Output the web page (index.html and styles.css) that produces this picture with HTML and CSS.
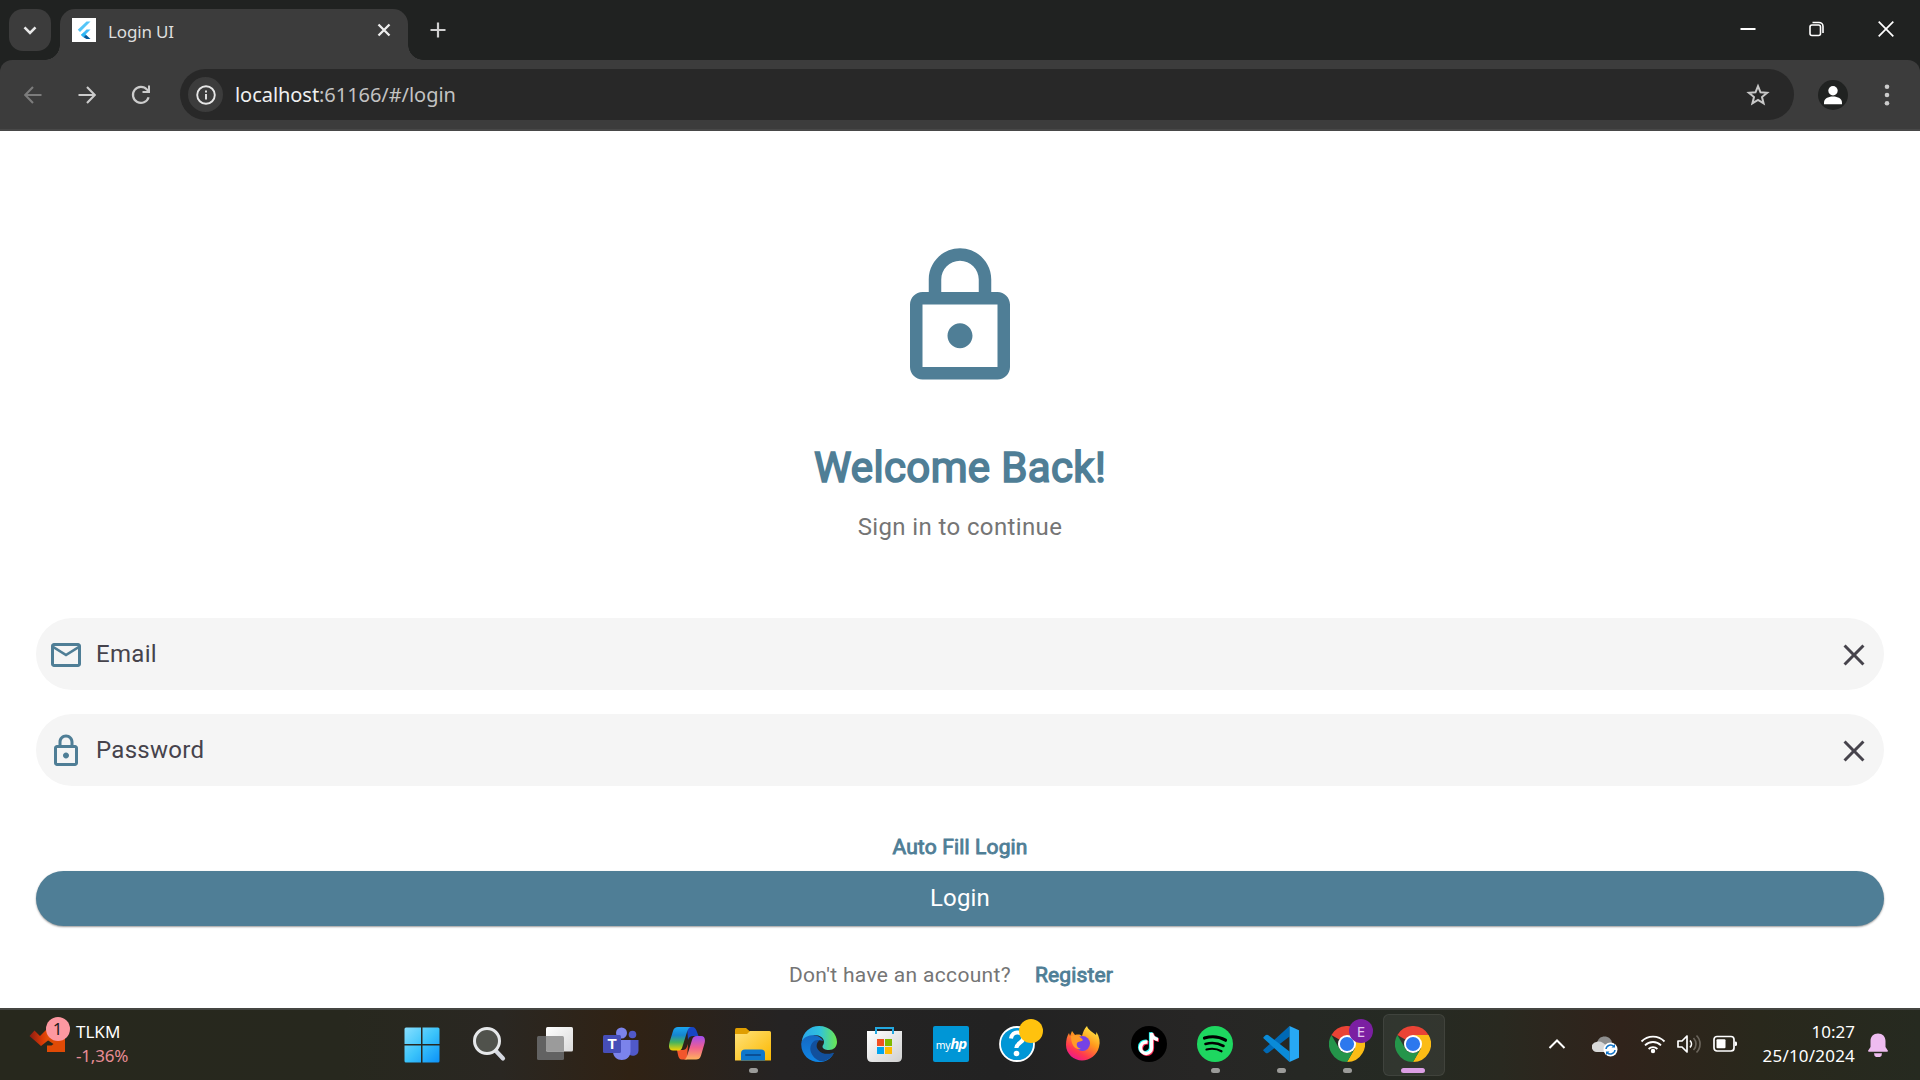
FILE: index.html
```html
<!DOCTYPE html>
<html lang="en">
<head>
<meta charset="utf-8">
<title>Login UI</title>
<link rel="stylesheet" href="styles.css">
</head>
<body>
<div class="screen">
  <header class="tabstrip">
    <button class="tab-search"><svg width="42" height="42" viewBox="0 0 42 42"><path d="M15.5 18.3l5.5 5.5 5.5-5.5" fill="none" stroke="#e8e8e8" stroke-width="2.6"/></svg></button>
    <div class="tab">
      <span class="favicon"><svg width="24" height="24" viewBox="0 0 24 24"><path d="M14.5 3.5h4L8 14l-2.200-2.200z" fill="#54c5f8"/><path d="M18.500 11.500h-4L9 17l2 2z" fill="#40b8f5"/><path d="M9 16.800l2.800-2.300 2.300 2.300-2.500 2.400z" fill="#29b6f6"/><path d="M11.500 19.300l2.500-2.500 4.500 4.200h-4z" fill="#01579b"/></svg></span>
      <span class="tab-title">Login UI</span>
      <svg class="tab-close" width="14" height="14" viewBox="0 0 14 14"><path d="M1.500 1.500l11 11M12.500 1.500l-11 11" stroke="#eee" stroke-width="2.300"/></svg>
    </div>
    <svg class="new-tab" width="16" height="16" viewBox="0 0 16 16"><path d="M8 .5v15M.5 8h15" stroke="#d0d0d0" stroke-width="2.200"/></svg>
    <div class="window-controls">
      <svg width="16" height="16" viewBox="0 0 16 16"><path d="M.5 8h15" stroke="#fff" stroke-width="2"/></svg>
      <svg width="16" height="16" viewBox="0 0 16 16"><rect x="1" y="4" width="10.500" height="10.500" rx="2" fill="none" stroke="#fff" stroke-width="1.600"/><path d="M3.500 1.500H10a4 4 0 0 1 4 4V12" fill="none" stroke="#fff" stroke-width="1.600"/></svg>
      <svg width="16" height="16" viewBox="0 0 16 16"><path d="M.7.7l14.600 14.600M15.300.7L.7 15.300" stroke="#fff" stroke-width="1.700"/></svg>
    </div>
  </header>

  <nav class="toolbar">
    <div class="nav-buttons">
      <svg width="18" height="18" viewBox="0 0 18 18"><path d="M17.500 9H1.500M9 1L1.200 9 9 17" fill="none" stroke="#7c7c7c" stroke-width="2.100"/></svg>
      <svg width="18" height="18" viewBox="0 0 18 18"><path d="M.5 9h16M9 1l7.800 8L9 17" fill="none" stroke="#ccc" stroke-width="2.100"/></svg>
      <svg width="20" height="20" viewBox="0 0 20 20"><path d="M17.600 12.200A8 8 0 1 1 16 4.600L18 6.800" fill="none" stroke="#ccc" stroke-width="2.200"/><path d="M19 .5V8h-7.500V5.900H17V.5z" fill="#ccc"/></svg>
    </div>
    <div class="omnibox">
      <span class="site-info"><svg width="20" height="20" viewBox="0 0 20 20"><circle cx="10" cy="10" r="8.800" fill="none" stroke="#e6e6e6" stroke-width="1.900"/><path d="M10 9v5.500M10 5.400v2" stroke="#e6e6e6" stroke-width="1.900"/></svg></span>
      <span class="url"><b>localhost</b>:61166/#/login</span>
      <svg class="star" width="24" height="24" viewBox="0 0 24 24"><path d="M12 3.200l2.500 6.100 6.600.5-5.100 4.200 1.600 6.400L12 16.900l-5.600 3.500L8 14 2.900 9.800l6.600-.5z" fill="none" stroke="#c8c8c8" stroke-width="2"/></svg>
    </div>
    <span class="avatar"><svg width="30" height="30" viewBox="0 0 30 30"><circle cx="15" cy="10.700" r="4.700" fill="#fff"/><path d="M6 24.200v-1.500c0-4 4-6.200 9-6.200s9 2.200 9 6.200v1.500z" fill="#fff"/></svg></span>
    <svg class="menu" width="6" height="24" viewBox="0 0 6 24"><circle cx="3" cy="3.700" r="2.300" fill="#ccc"/><circle cx="3" cy="12" r="2.300" fill="#ccc"/><circle cx="3" cy="20.300" r="2.300" fill="#ccc"/></svg>
  </nav>

  <main class="page">
    <svg class="lock" width="150" height="150" viewBox="0 0 24 24" fill="#4f7e96"><path d="M12 17c1.100 0 2-.9 2-2s-.9-2-2-2-2 .9-2 2 .9 2 2 2zm6-9h-1V6c0-2.760-2.240-5-5-5S7 3.240 7 6v2H6c-1.100 0-2 .9-2 2v10c0 1.100.9 2 2 2h12c1.100 0 2-.9 2-2V10c0-1.100-.9-2-2-2zM9 6c0-1.660 1.340-3 3-3s3 1.340 3 3v2H9V6zm9 14H6V10h12v10z"/></svg>
    <h1 class="heading">Welcome Back!</h1>
    <p class="subtitle">Sign in to continue</p>
    <form class="form">
      <div class="field">
        <svg width="36" height="36" viewBox="0 0 24 24" fill="#4f7e96"><path d="M20 4H4c-1.100 0-2 .9-2 2v12c0 1.100.9 2 2 2h16c1.100 0 2-.9 2-2V6c0-1.100-.9-2-2-2zm0 14H4V8l8 5 8-5v10zm-8-7L4 6h16l-8 5z"/></svg>
        <label>Email</label>
        <svg width="36" height="36" viewBox="0 0 24 24" fill="#46434c"><path d="M19 6.410L17.590 5 12 10.590 6.410 5 5 6.410 10.590 12 5 17.590 6.410 19 12 13.410 17.590 19 19 17.590 13.410 12z"/></svg>
      </div>
      <div class="field">
        <svg width="36" height="36" viewBox="0 0 24 24" fill="#4f7e96"><path d="M12 17c1.100 0 2-.9 2-2s-.9-2-2-2-2 .9-2 2 .9 2 2 2zm6-9h-1V6c0-2.760-2.240-5-5-5S7 3.240 7 6v2H6c-1.100 0-2 .9-2 2v10c0 1.100.9 2 2 2h12c1.100 0 2-.9 2-2V10c0-1.100-.9-2-2-2zM9 6c0-1.660 1.340-3 3-3s3 1.340 3 3v2H9V6zm9 14H6V10h12v10z"/></svg>
        <label>Password</label>
        <svg width="36" height="36" viewBox="0 0 24 24" fill="#46434c"><path d="M19 6.410L17.590 5 12 10.590 6.410 5 5 6.410 10.590 12 5 17.590 6.410 19 12 13.410 17.590 19 19 17.590 13.410 12z"/></svg>
      </div>
    </form>
    <a class="link autofill">Auto Fill Login</a>
    <button class="login">Login</button>
    <div class="signup"><span>Don't have an account?</span><a class="link">Register</a></div>
  </main>

  <footer class="taskbar">
    <div class="widget">
      <div class="widget-icon">
        <svg width="40" height="36" viewBox="0 0 40 36"><defs><linearGradient id="wg"><stop offset="0" stop-color="#8a1c14"/><stop offset=".5" stop-color="#d93a05"/><stop offset="1" stop-color="#f06a10"/></linearGradient></defs><path d="M.5 20l5-5.500 5.500 5.500 8-8 7 7-14 11z" fill="url(#wg)"/><path d="M18 36V29.500h4.500l2-1.500-6-4L27 16h9v20z" fill="#e04a05"/></svg>
        <span class="count">1</span>
      </div>
      <div class="widget-text"><span>TLKM</span><span class="change">-1,36%</span></div>
    </div>

    <div class="apps">
      <div class="app start"><svg width="36" height="36" viewBox="0 0 36 36"><defs><linearGradient id="win" x2="1" y2="1" gradientUnits="userSpaceOnUse" gradientTransform="scale(36)"><stop offset="0" stop-color="#8ae0ff"/><stop offset=".5" stop-color="#3cc4fb"/><stop offset="1" stop-color="#0a90f8"/></linearGradient></defs><path d="M2 .5h15v16.500H.5V2Q.5.500 2 .5zM18.500.5H34q1.500 0 1.500 1.500v15h-17zM.5 18.500H17v17H2Q.5 35.500.5 34zM18.500 18.500h17V34q0 1.500-1.500 1.500H18.500z" fill="url(#win)"/></svg></div>
      <div class="app"><svg width="36" height="36" viewBox="0 0 36 36"><path d="M25 25l7 7.500" stroke="#d5d8e0" stroke-width="4.200" stroke-linecap="round"/><circle cx="16" cy="15" r="12.500" fill="#50524c" stroke="#e6e8ea" stroke-width="3"/></svg></div>
      <div class="app"><svg width="36" height="36" viewBox="0 0 36 36"><defs><linearGradient id="tv" x2="1" y2="1"><stop stop-color="#fff"/><stop offset="1" stop-color="#dadada"/></linearGradient></defs><rect y="10" width="27" height="24" rx="1.500" fill="#626262"/><rect x="9" y="1" width="27" height="24.500" rx="1.500" fill="url(#tv)"/><path d="M9 10h16.500Q27 10 27 11.500v14H10.500Q9 25.500 9 24z" fill="#9b9b9b"/></svg></div>
      <div class="app"><svg width="36" height="36" viewBox="0 0 36 36"><circle cx="29.500" cy="8.500" r="3.800" fill="#5059c9"/><path d="M25 14h10.500v10.500a5.500 5.500 0 0 1-10.500 2z" fill="#5059c9"/><circle cx="18.500" cy="7" r="5.500" fill="#7b83eb"/><path d="M10 14h17.500v11.500c0 5-4 8.500-8.700 8.500S10 30.500 10 25.500z" fill="#7b83eb"/><rect y="9" width="18" height="18" rx="1.500" fill="#464eb8"/><text x="9" y="23" text-anchor="middle" class="glyph-t">T</text></svg></div>
      <div class="app"><svg width="36" height="36" viewBox="0 0 36 36"><defs><linearGradient id="c1" x2="0" y2="1"><stop stop-color="#1ba5f0"/><stop offset=".35" stop-color="#1685cf"/><stop offset=".65" stop-color="#45b35e"/><stop offset="1" stop-color="#f5d400"/></linearGradient><linearGradient id="c2" x2="0" y2="1"><stop stop-color="#a04df0"/><stop offset=".5" stop-color="#f0608f"/><stop offset="1" stop-color="#ffb25c"/></linearGradient></defs><path d="M18 1h5c3 0 4 2 5 5l1.500 4H24c-3 0-4 1-5 4z" fill="#1746c5"/><path d="M18 33.500h-5c-2.500 0-3.500-2-4-4.500L8 24h6c3 0 4-3 5-6z" fill="#f2562c"/><path d="M9 1h13c-2 .5-3 2-4 5l-5 16c-.8 2-2 2.500-4 2.500H4C0 24.500-.8 21 .6 16L4 5c1-3 2.500-4 5-4z" fill="url(#c1)"/><path d="M27 33.500H15c2-.5 2.500-2 3.500-5l4.500-14.500c1-3 2-4 5-4h4c4 0 4.500 4 3.500 7.500L32 29.500c-1 3-2.500 4-5 4z" fill="url(#c2)"/></svg></div>
      <div class="app running"><svg width="36" height="36" viewBox="0 0 36 36"><defs><linearGradient id="fo" x2="1" y2="1"><stop stop-color="#ffe27a"/><stop offset="1" stop-color="#fbb800"/></linearGradient></defs><path d="M0 4q0-2 1.500-2H11l4 3.500V10H0z" fill="#e09e00"/><path d="M0 8h12l3-3h19.500Q36 5 36 6.500V34.500H0z" fill="url(#fo)"/><path d="M6 34.500v-7q0-4 4-4h16q4 0 4 4v7z" fill="#0f77cc"/><path d="M11 29h14" stroke="#0a4f96" stroke-width="2" stroke-linecap="round"/></svg></div>
      <div class="app"><svg width="36" height="36" viewBox="0 0 36 36"><defs><linearGradient id="e1" x2="1"><stop stop-color="#2aa6ea"/><stop offset=".5" stop-color="#2fc1df"/><stop offset="1" stop-color="#6be850"/></linearGradient><linearGradient id="e2" x2="0" y2="1"><stop stop-color="#1567c0"/><stop offset="1" stop-color="#0f86e6"/></linearGradient></defs><path d="M.3 17C2 10 7 8 12 9c5 .5 9 3 10 6-4-2-8 0-8 5 0 6 7 10 13 9 2.500-.3 4-1 5.500-1.800C30 33 25 36 18 36 8 36-.5 28 .3 17z" fill="url(#e2)"/><path d="M14 14.500c-5 3-6 9-3 14 3 5 8 7.500 12 6.700 4.500-1.500 8-4.500 10-8-.5-.8-1-.6-1.700-.3-5 2-11 .8-14-3-2.500-3-2-6.500.7-9.500-1.300-.6-2.700-.5-4 .1z" fill="#12509c"/><path d="M.6 16C2 6 9 0 18 0c11 0 18 8 18 16 0 5-3.500 8-8 8-4 0-6.500-1.500-6.500-3.500 0-1.500 1.500-2 1.500-4.500 0-4-4-7-9.500-7C6.500 9 2 12 .6 16z" fill="url(#e1)"/></svg></div>
      <div class="app"><svg width="36" height="36" viewBox="0 0 36 36"><defs><linearGradient id="st" x2="1" y2="1"><stop stop-color="#fff"/><stop offset="1" stop-color="#d0d0d0"/></linearGradient></defs><path d="M0 5h35v26q0 5-5 5H5q-5 0-5-5z" fill="url(#st)"/><path d="M9 8V2h17v6" fill="none" stroke="#23a8e0" stroke-width="2"/><path d="M10 13h7v7h-7z" fill="#f25022"/><path d="M18 13h7v7h-7z" fill="#7fba00"/><path d="M10 21h7v7h-7z" fill="#00a4ef"/><path d="M18 21h7v7h-7z" fill="#ffb900"/></svg></div>
      <div class="app"><div class="myhp">my<b>hp</b></div></div>
      <div class="app"><svg width="36" height="36" viewBox="0 0 36 36"><circle cx="18" cy="18" r="17" fill="#0096d6" stroke="#fff" stroke-width="1.800"/><path d="M12 12.500c.5-4 3.500-6.500 7-6 4 .5 6 3.500 5 7-1 3-6.500 4-6.700 8.500" fill="none" stroke="#fff" stroke-width="4"/><circle cx="17.500" cy="27.500" r="2.800" fill="#fff"/></svg><span class="badge amber"></span></div>
      <div class="app"><svg width="36" height="36" viewBox="0 0 36 36"><defs><linearGradient id="ff" x1=".8" y1="0" x2=".2" y2="1"><stop stop-color="#fff04a"/><stop offset=".4" stop-color="#ff9a1c"/><stop offset=".75" stop-color="#ff3750"/><stop offset="1" stop-color="#e8129a"/></linearGradient></defs><path d="M22 0c1 4 6 6 9 9l.5-3c3 5 4 10 2.500 15-2 8-9 13.500-17 13.500S1 28 1 19C1 14 2 10 4 7l1 3 2-5 3 4c4-1 6 0 7 1 1-4 2-7 5-10z" fill="url(#ff)"/><circle cx="17.500" cy="17.500" r="7.500" fill="#7542e5"/><path d="M6 10c4-2 9 0 12 4-1 2-5 1-6 3-1 3 1 5 4 6-6 1-10-4-10-13z" fill="#ff9b27"/></svg></div>
      <div class="app"><svg width="36" height="36" viewBox="0 0 36 36"><circle cx="18" cy="18" r="18" fill="#000"/><g fill="none" stroke-width="3.400"><path d="M16.500 16c-4-.5-7 2-7 6 0 3 2.500 5.500 5.500 5.500s5.500-2.500 5.500-5.500V7c.5 4 3 6 6.500 6.500" stroke="#25f4ee" transform="translate(-.9 -.8)"/><path d="M16.500 16c-4-.5-7 2-7 6 0 3 2.500 5.500 5.500 5.500s5.500-2.500 5.500-5.500V7c.5 4 3 6 6.500 6.500" stroke="#fe2c55" transform="translate(.9 .8)"/><path d="M16.500 16c-4-.5-7 2-7 6 0 3 2.500 5.500 5.500 5.500s5.500-2.500 5.500-5.500V7c.5 4 3 6 6.500 6.500" stroke="#fff"/></g></svg></div>
      <div class="app running"><svg width="36" height="36" viewBox="0 0 36 36"><circle cx="18" cy="18" r="18" fill="#1ed760"/><g fill="none" stroke="#000" stroke-linecap="round"><path d="M7.500 12c7-2 15-1.300 21 2.200" stroke-width="3.200"/><path d="M8.500 18c6-1.700 12.500-1 18 2" stroke-width="2.600"/><path d="M9.500 23.500c5-1.300 10.500-.8 15 1.800" stroke-width="2.200"/></g></svg></div>
      <div class="app running"><svg width="36" height="36" viewBox="0 0 36 36"><path d="M.7 23.500L26.500 0v10.500L5 27q-1.500.7-2.500-.3L.7 25q-.9-.8 0-1.500z" fill="#0069b5"/><path d="M.7 12.500L26.500 36V25.500L5 9Q3.500 8.300 2.500 9.300L.7 11q-.9.800 0 1.500z" fill="#0a8bd8"/><path d="M26.500 0L36 4.200v27.600L26.500 36z" fill="#27a8f4"/></svg></div>
      <div class="app running"><svg width="36" height="36" viewBox="0 0 36 36"><path d="M18 18L2.400 9A18 18 0 0 1 33.600 9z" fill="#ea4335"/><path d="M18 9h15.600A18 18 0 0 1 18 36l7.800-13.500z" fill="#fbbc15"/><path d="M2.400 9l7.800 13.500a9 9 0 0 0 15.600 0L18 36A18 18 0 0 1 2.400 9z" fill="#24954a"/><circle cx="18" cy="18" r="9" fill="#fff"/><circle cx="18" cy="18" r="7.100" fill="#2c78ee"/></svg><span class="badge purple">E</span></div>
      <div class="app active"><svg width="36" height="36" viewBox="0 0 36 36"><path d="M18 18L2.400 9A18 18 0 0 1 33.600 9z" fill="#ea4335"/><path d="M18 9h15.600A18 18 0 0 1 18 36l7.800-13.500z" fill="#fbbc15"/><path d="M2.400 9l7.800 13.500a9 9 0 0 0 15.600 0L18 36A18 18 0 0 1 2.400 9z" fill="#24954a"/><circle cx="18" cy="18" r="9" fill="#fff"/><circle cx="18" cy="18" r="7.100" fill="#2c78ee"/></svg></div>
    </div>

    <div class="tray">
      <svg class="chevron" width="18" height="12" viewBox="0 0 18 12"><path d="M1.500 10L9 2.500l7.500 7.500" fill="none" stroke="#fff" stroke-width="2"/></svg>
      <svg class="cloud" width="26" height="22" viewBox="0 0 26 22"><path d="M5 8C6 3.500 9 1.500 12.500 1.500c4 0 7 2.500 7.500 6.500l-6 3z" fill="#8e8e8e"/><path d="M5 17a5 5 0 0 1-.5-10c4-1.500 7 1 9 3l7 4v3z" fill="#d9d9d9"/><circle cx="18.500" cy="14.500" r="7" fill="#fff"/><path d="M14 14a4.600 4.600 0 0 1 8-2.500M23 15a4.600 4.600 0 0 1-8 2.500" fill="none" stroke="#1173c7" stroke-width="1.500"/><path d="M23 9v3.500h-3.500zM14 20v-3.500h3.500z" fill="#1173c7"/></svg>
      <svg class="wifi" width="26" height="20" viewBox="0 0 26 20"><g fill="none" stroke="#fff" stroke-width="1.800"><path d="M1.500 7.500a16 16 0 0 1 23 0M5 11.300a11.300 11.300 0 0 1 16 0M8.600 15a6.300 6.300 0 0 1 8.800 0"/></g><circle cx="13" cy="17" r="2.200" fill="#fff"/></svg>
      <svg class="sound" width="26" height="20" viewBox="0 0 26 20"><path d="M2 7h4l5-5v16l-5-5H2z" fill="none" stroke="#fff" stroke-width="1.700" stroke-linejoin="round"/><path d="M14 6.500a5 5 0 0 1 0 7" fill="none" stroke="#fff" stroke-width="1.700"/><path d="M17.500 4a8.500 8.500 0 0 1 0 12M20.500 1.500a12 12 0 0 1 0 17" fill="none" stroke="#6b655c" stroke-width="1.700"/></svg>
      <svg class="battery" width="26" height="18" viewBox="0 0 26 18"><rect x="2" y="1.500" width="20" height="14.500" rx="3" fill="none" stroke="#fff" stroke-width="1.700"/><rect x="4.500" y="4.300" width="9" height="9" rx="1" fill="#fff"/><path d="M23 6.500q2 0 2 1v2.500q0 1-2 1z" fill="#fff"/></svg>
      <div class="clock"><span>10:27</span><span class="date">25/10/2024</span></div>
      <svg class="bell" width="20" height="24" viewBox="0 0 20 24"><path d="M10 .5c4.500 0 7.500 3 7.500 7.500v6l2.300 3.500q.5 1.200-.8 1.200H1q-1.300 0-.8-1.200L2.500 14V8C2.500 3.500 5.500.5 10 .5zM6 20.300h8a4 4 0 0 1-8 0z" fill="#eebcf0"/></svg>
    </div>
  </footer>
</div>
</body>
</html>
```
FILE: styles.css
```css
* { box-sizing: border-box; }
body { margin: 0; background: #fff; font-family: Roboto, "Liberation Sans", sans-serif; }
svg { display: block; flex: none; }
button { border: 0; padding: 0; font: inherit; }
h1, p { margin: 0; }

.screen { width: 1920px; height: 1080px; display: flex; flex-direction: column; overflow: hidden; background: linear-gradient(#202221 80px, #fff 80px); }

/* Browser tab strip */
.tabstrip { position: relative; z-index: 1; height: 60px; flex: none; display: flex; align-items: flex-start; background: #202221; padding-left: 9px; font-family: "Noto Sans", sans-serif; }
.tab-search { width: 42px; height: 42px; margin-top: 9px; border-radius: 14px; background: #3c3c3c; }
.tab { position: relative; width: 348px; height: 51px; margin: 9px 0 0 9px; padding: 0 17px 9px 12px; display: flex; align-items: center; background: #3c3c3c; border-radius: 15px 15px 0 0; }
.tab::before, .tab::after { content: ""; position: absolute; bottom: 0; width: 15px; height: 15px; }
.tab::before { left: -15px; background: radial-gradient(circle at 0 0, transparent 14.500px, #3c3c3c 15px); }
.tab::after { right: -15px; background: radial-gradient(circle at 100% 0, transparent 14.500px, #3c3c3c 15px); }
.favicon { width: 24px; height: 24px; background: #fff; }
.tab-title { flex: 1; margin-left: 12px; padding-top: 3px; font-size: 17px; letter-spacing: -.15px; line-height: 24px; color: #dedede; }
.new-tab { margin: 22px 0 0 22px; }
.window-controls { margin: 21px 26px 0 auto; display: flex; gap: 53px; }

/* Browser toolbar */
.toolbar { height: 71px; flex: none; display: flex; align-items: center; background: #3c3c3c; border-bottom: 2px solid #484848; border-radius: 12px 12px 0 0; padding-left: 24px; }
.nav-buttons { width: 156px; display: flex; align-items: center; gap: 36px; }
.nav-buttons svg:last-child { margin-left: -1px; }
.omnibox { width: 1614px; height: 51px; display: flex; align-items: center; padding: 0 24px 0 8px; background: #282828; border-radius: 26px; font-family: "Noto Sans", sans-serif; }
.site-info { width: 35px; height: 35px; display: grid; place-items: center; border-radius: 50%; background: #3c3c3c; }
.url { flex: 1; margin-left: 12px; font-size: 20px; letter-spacing: -.05px; color: #c3c3c3; }
.url b { font-weight: 400; color: #f0f0f0; }
.avatar { width: 30px; height: 30px; margin-left: 24px; border-radius: 50%; background: #202221; }
.menu { margin-left: 36px; }

/* Login page */
.page { height: 877px; flex: none; display: flex; flex-direction: column; align-items: center; padding: 111px 36px 0; background: #fff; }
.heading { margin-top: 51px; font-size: 42px; line-height: 50px; font-weight: 400; color: #4f7e96; -webkit-text-stroke: 1.700px #4f7e96; letter-spacing: .35px; }
.subtitle { margin-top: 16px; font-size: 24px; line-height: 36px; letter-spacing: .38px; color: #757575; }
.form { width: 100%; margin-top: 73.400px; display: flex; flex-direction: column; gap: 24px; }
.field { height: 72px; display: flex; align-items: center; padding: 0 12px; background: #f5f5f5; border-radius: 36px; }
.field label { flex: 1; margin: -1px 0 0 12px; font-size: 24px; letter-spacing: .3px; color: #46434c; }
.field svg { margin-top: 1px; }
.link { font-size: 21px; line-height: 30px; color: #4f7e96; -webkit-text-stroke: .9px #4f7e96; letter-spacing: .15px; }
.autofill { margin-top: 45.600px; }
.login { width: 100%; height: 55px; margin-top: 9px; border-radius: 28px; background: #4f7e96; color: #fff; font-size: 24px; letter-spacing: .15px; box-shadow: 0 1px 2px rgba(0,0,0,.4); }
.signup { display: flex; gap: 24px; margin: 34px 18px 0 0; font-size: 21px; line-height: 30px; letter-spacing: .33px; color: #757575; }

/* Taskbar */
.taskbar { height: 72px; flex: none; display: flex; align-items: stretch; border-top: 2px solid #454642; color: #fff; font-family: "Noto Sans", sans-serif; font-size: 17px; line-height: 24px;
  background: linear-gradient(90deg, #27281d 0, #27281e 340px, #2a2722 500px, #302214 630px, #252323 780px, #222 1000px, #272625 1200px, #252a23 1400px, #292920 1500px, #30231b 1620px, #29281c 1760px, #262a20 1920px); }
.widget { width: 390px; padding-left: 29px; display: flex; align-items: flex-start; }
.widget-icon { position: relative; width: 40px; padding-top: 6px; }
.count { position: absolute; left: 16.500px; top: 7px; width: 24px; height: 24px; border-radius: 50%; background: #fd98a1; color: #241c1c; font-size: 17px; line-height: 24px; text-align: center; }
.widget-text { margin: 10px 0 0 7px; display: flex; flex-direction: column; }
.change { color: #e88d95; letter-spacing: -.2px; }
.apps { display: flex; }
.app { position: relative; width: 66px; padding-bottom: 2px; display: grid; place-items: center; }
.start { padding: 0 3px 1px 0; }
.running::after, .active::after { content: ""; position: absolute; left: 29px; top: 58px; width: 9px; height: 5px; border-radius: 3px; background: #9b9b99; }
.active::after { left: 21px; width: 24px; background: #dc9fe5; }
.active::before { content: ""; position: absolute; left: 3px; top: 4px; width: 60px; height: 60px; border-radius: 6px; background: rgba(255,255,255,.06); border: 1px solid rgba(255,255,255,.07); }
.active svg { position: relative; }
.glyph-t { font: bold 15px "Liberation Sans", sans-serif; fill: #fff; }
.myhp { width: 36px; height: 36px; border-radius: 2px; background: #0096d6; text-align: center; font: 10.500px/35px "Noto Sans", sans-serif; letter-spacing: -.4px; }
.myhp b { font-size: 15px; font-style: italic; letter-spacing: -1px; }
.badge { position: absolute; left: 35px; top: 9px; width: 24px; height: 24px; border-radius: 50%; text-align: center; }
.amber { background: #ffc20e; }
.purple { background: #7b1fa2; color: #e3c4ef; font-size: 15px; }
.tray { flex: 1; display: flex; align-items: center; justify-content: flex-end; padding: 0 32px 3px 0; }
.cloud { margin: 4px 0 0 26px; }
.wifi { margin-left: 22px; }
.sound { margin: 1px 0 0 10px; }
.battery { margin-left: 10px; }
.clock { width: 117px; display: flex; flex-direction: column; align-items: flex-end; }
.date { letter-spacing: .2px; }
.bell { margin: 3px 0 0 13px; }
```
